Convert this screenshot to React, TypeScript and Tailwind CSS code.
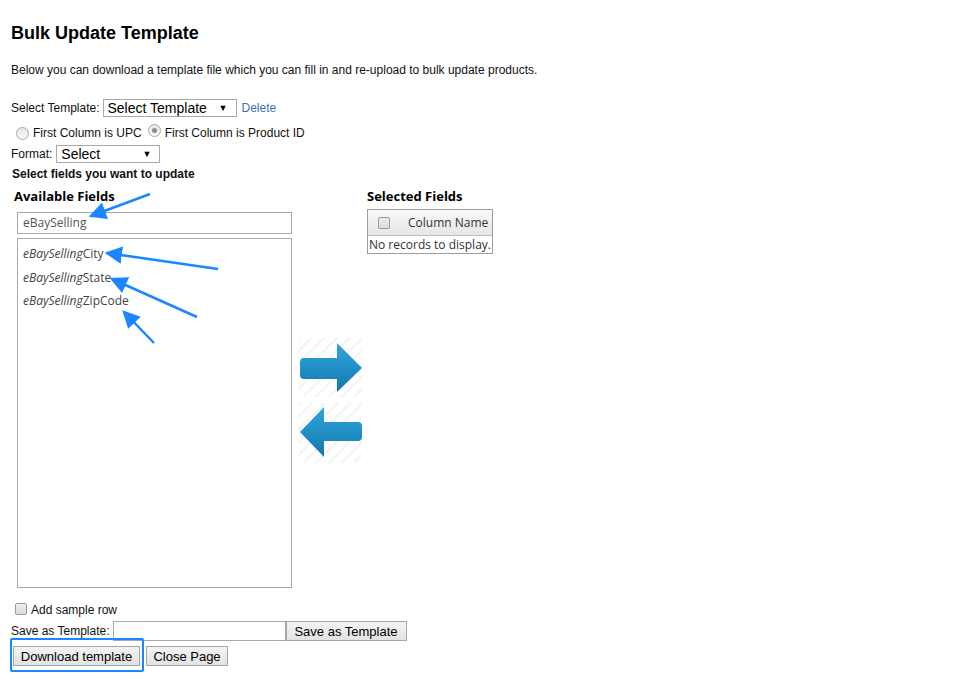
import React from 'react'

// Bulk update template page

const fieldMatches = ['City', 'State', 'ZipCode']

function Radio({ checked }: { checked?: boolean }) {
    return (
        <span className="relative inline-block w-[13px] h-[13px] rounded-full border border-[#a8a8a8] bg-gradient-to-b from-[#e6e6e6] to-[#f8f8f8]">
            {checked && <span className="absolute left-[3px] top-[3px] w-[5px] h-[5px] rounded-full bg-[#8a8a8a]" />}
        </span>
    )
}

function Checkbox() {
    return <span className="inline-block w-[12px] h-[12px] rounded-[2px] border border-[#9a9a9a] bg-gradient-to-b from-[#ececec] to-[#dcdcdc]" />
}

function FakeSelect({ label, width, textSize }: { label: string; width: string; textSize: string }) {
    return (
        <div className={`flex items-center justify-between h-[18px] border border-[#a9a9a9] bg-white pl-[4px] pr-[8px] ${width}`}>
            <span className={`${textSize} leading-none text-black`}>{label}</span>
            <span className="text-[9px] leading-none text-black">▼</span>
        </div>
    )
}

function Button({ children, className }: { children: React.ReactNode; className?: string }) {
    return (
        <div className={`h-[20px] flex items-center justify-center border border-[#a6a6a6] bg-gradient-to-b from-[#f4f4f4] to-[#e2e2e2] text-[13px] leading-none text-black ${className ?? ''}`}>
            {children}
        </div>
    )
}

function Stripes({ id }: { id: string }) {
    return (
        <pattern id={id} width="9" height="9" patternUnits="userSpaceOnUse" patternTransform="rotate(45)">
            <rect width="9" height="9" fill="#ffffff" />
            <rect width="2" height="9" fill="#f3f3f3" />
        </pattern>
    )
}

function RightArrow() {
    return (
        <svg width="64" height="60" viewBox="0 0 64 60">
            <defs>
                <Stripes id="stripeR" />
                <linearGradient id="gradR" x1="0" y1="0" x2="0" y2="1">
                    <stop offset="0" stopColor="#2fa6dc" />
                    <stop offset="1" stopColor="#1478ad" />
                </linearGradient>
            </defs>
            <rect width="64" height="60" fill="url(#stripeR)" />
            <path d="M6 21 H39 V6 L64 31 L39 55 V42 H6 Q2 42 2 38 V25 Q2 21 6 21 Z" fill="url(#gradR)" />
        </svg>
    )
}

function LeftArrow() {
    return (
        <svg width="64" height="60" viewBox="0 0 64 60">
            <defs>
                <Stripes id="stripeL" />
                <linearGradient id="gradL" x1="0" y1="0" x2="0" y2="1">
                    <stop offset="0" stopColor="#2fa6dc" />
                    <stop offset="1" stopColor="#1478ad" />
                </linearGradient>
            </defs>
            <rect width="64" height="60" fill="url(#stripeL)" />
            <path d="M60 19 H26 V4 L2 29 L26 54 V38 H60 Q64 38 64 34 V23 Q64 19 60 19 Z" fill="url(#gradL)" />
        </svg>
    )
}

function Annotations() {
    const lines = [
        [150, 194, 91, 216],
        [218, 269, 107, 253],
        [197, 317, 112, 279],
        [154, 343, 124, 312],
    ]
    return (
        <svg className="absolute left-0 top-0 pointer-events-none" width="959" height="686">
            <defs>
                <marker id="head" markerWidth="7" markerHeight="7" refX="6" refY="3.5" orient="auto" markerUnits="strokeWidth">
                    <path d="M0 0 L7 3.5 L0 7 Z" fill="#1a86ff" />
                </marker>
            </defs>
            {lines.map((l, i) => (
                <line key={i} x1={l[0]} y1={l[1]} x2={l[2]} y2={l[3]} stroke="#1a86ff" strokeWidth="2.5" markerEnd="url(#head)" />
            ))}
        </svg>
    )
}

export default function App() {
    return (
        <div className="relative w-[959px] h-[686px] bg-white overflow-hidden">
            <div className="pl-[11px] pt-[22px] font-['Liberation_Sans',Arial,sans-serif] text-[12px] text-[#111]">
                {/* Title */}
                <h1 className="h-[22px] leading-[22px] text-[18px] font-bold text-black">Bulk Update Template</h1>
                <p className="mt-[19px] leading-[14px]">Below you can download a template file which you can fill in and re-upload to bulk update products.</p>

                {/* Template selection */}
                <div className="mt-[22px] flex items-center h-[18px]">
                    <span className="mr-[3px]">Select Template:</span>
                    <FakeSelect label="Select Template" width="w-[134px]" textSize="text-[14px]" />
                    <span className="ml-[5px] text-[#3a72b5]">Delete</span>
                </div>

                <div className="mt-[9px] h-[14px] flex items-center pl-[5px]">
                    <Radio />
                    <span className="ml-[4px]">First Column is UPC</span>
                    <span className="ml-[6px]"><Radio checked /></span>
                    <span className="ml-[4px]">First Column is Product ID</span>
                </div>

                <div className="mt-[5px] flex items-center h-[18px]">
                    <span className="mr-[4px]">Format:</span>
                    <FakeSelect label="Select" width="w-[104px]" textSize="text-[14px]" />
                </div>

                <div className="mt-[4px] h-[14px] leading-[14px] font-bold pl-[1px]">Select fields you want to update</div>

                {/* Field pickers */}
                <div className="mt-[7px] flex font-['Open_Sans',sans-serif]">
                    <div className="w-[281px] flex flex-col">
                        <div className="pl-[3px] h-[16px] leading-[16px] text-[13px] font-bold text-black">Available Fields</div>
                        <div className="mt-[8px] ml-[6px] h-[22px] border border-[#a9a9a9] flex items-center pl-[5px] text-[12px] text-[#555]">eBaySelling</div>
                        <div className="mt-[4px] ml-[6px] h-[350px] border border-[#a9a9a9] pl-[5px] pt-[5px] text-[12px] text-[#444]">
                            {fieldMatches.map((f) => (
                                <div key={f} className="h-[23.5px] leading-[20px]">
                                    <i>eBaySelling</i>{f}
                                </div>
                            ))}
                        </div>
                    </div>

                    <div className="ml-[6px] pt-[149px] flex flex-col gap-[6px]">
                        <RightArrow />
                        <LeftArrow />
                    </div>

                    <div className="ml-[5px] flex flex-col">
                        <div className="h-[16px] leading-[16px] text-[13px] font-bold text-black">Selected Fields</div>
                        <div className="mt-[5px] w-[126px] border border-[#9c9c9c] text-[12px] text-[#333]">
                            <div className="h-[26px] flex items-center bg-gradient-to-b from-[#f8f8f8] to-[#e6e6e6] border-b border-[#bdbdbd] pl-[10px]">
                                <Checkbox />
                                <span className="ml-[18px]">Column Name</span>
                            </div>
                            <div className="h-[17px] leading-[17px] pl-[1px]">No records to display.</div>
                        </div>
                    </div>
                </div>

                {/* Bottom actions */}
                <div className="mt-[14px] h-[13px] flex items-center pl-[4px]">
                    <Checkbox />
                    <span className="ml-[4px] mt-[2px]">Add sample row</span>
                </div>

                <div className="mt-[6px] flex items-center h-[20px]">
                    <span className="mr-[3px]">Save as Template:</span>
                    <div className="w-[173px] h-[20px] border border-[#a9a9a9] bg-white" />
                    <Button className="w-[121px]">Save as Template</Button>
                </div>

                <div className="mt-[5px] flex items-center pl-[2px]">
                    <div className="relative">
                        <Button className="w-[127px]">Download template</Button>
                        <div className="absolute left-[-3px] right-[-4px] top-[-8px] bottom-[-6px] border-2 border-[#1a86ff] rounded-[2px]" />
                    </div>
                    <Button className="ml-[6px] w-[82px]">Close Page</Button>
                </div>
            </div>

            <Annotations />
        </div>
    )
}
